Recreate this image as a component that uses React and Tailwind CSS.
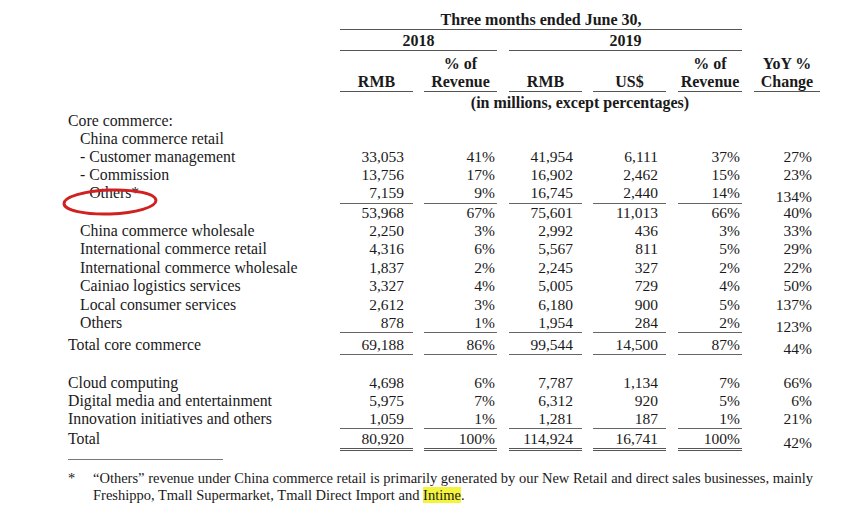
const cols = [
  'w-[73px] pr-[9px]',
  'ml-[11px] w-[73px] pr-[2px]',
  'ml-[12px] w-[73px] pr-[9px]',
  'ml-[11px] w-[73px] pr-[8px]',
  'ml-[12px] w-[64px] pr-[2px]',
  'ml-[12px] w-[66px] pr-[8px]',
];

const top = [
  { label: 'Core commerce:' },
  { label: 'China commerce retail', indent: true },
  { label: '- Customer management', indent: true, v: ['33,053', '41%', '41,954', '6,111', '37%', '27%'] },
  { label: '- Commission', indent: true, v: ['13,756', '17%', '16,902', '2,462', '15%', '23%'] },
];

const mid = [
  { label: 'China commerce wholesale', v: ['2,250', '3%', '2,992', '436', '3%', '33%'] },
  { label: 'International commerce retail', v: ['4,316', '6%', '5,567', '811', '5%', '29%'] },
  { label: 'International commerce wholesale', v: ['1,837', '2%', '2,245', '327', '2%', '22%'] },
  { label: 'Cainiao logistics services', v: ['3,327', '4%', '5,005', '729', '4%', '50%'] },
  { label: 'Local consumer services', v: ['2,612', '3%', '6,180', '900', '5%', '137%'] },
];

const other = [
  { label: 'Cloud computing', v: ['4,698', '6%', '7,787', '1,134', '7%', '66%'] },
  { label: 'Digital media and entertainment', v: ['5,975', '7%', '6,312', '920', '5%', '6%'] },
];

function Row({ label, indent, v = [], h = 'h-[18px]', line, shift, pad = '' }) {
  return (
    <div className={`flex ${h} leading-[18px]`}>
      <div className={`w-[272px] text-[15.8px] ${indent ? 'pl-[12px]' : ''} ${pad}`}>{label}</div>
      {v.map((x, i) => (
        <div
          key={i}
          className={`${cols[i]} text-right ${pad} ${line && i < 5 ? line : ''} ${shift && i === 5 ? 'translate-y-[4px]' : ''}`}
        >
          {x}
        </div>
      ))}
    </div>
  );
}

export default function App() {
  return (
    <div className="relative w-[864px] h-[524px] bg-white text-[#1a1a1a] font-['Liberation_Serif',serif] text-[15.5px] pl-[68px] pt-[11px] overflow-hidden">
      {/* header */}
      <div className="font-bold text-[16px]">
        <div className="flex">
          <div className="w-[272px]" />
          <div className="w-[402px] text-center leading-[18px] border-b border-[#555]">Three months ended June 30,</div>
        </div>
        <div className="flex mt-[2px]">
          <div className="w-[272px]" />
          <div className="w-[157px] text-center leading-[18px] border-b border-[#555]">2018</div>
          <div className="ml-[12px] w-[233px] text-center leading-[18px] border-b border-[#555]">2019</div>
        </div>
        <div className="flex mt-[4px] leading-[18px]">
          <div className="w-[272px]" />
          {[['', 'RMB'], ['% of', 'Revenue'], ['', 'RMB'], ['', 'US$'], ['% of', 'Revenue'], ['YoY %', 'Change']].map((c, i) => (
            <div key={i} className={`${cols[i]} !px-0 text-center border-b border-[#555]`}>
              <div className="h-[18px]">{c[0]}</div>
              <div>{c[1]}</div>
            </div>
          ))}
        </div>
        <div className="flex mt-[2px] leading-[18px]">
          <div className="w-[272px]" />
          <div className="w-[480px] text-center">(in millions, except percentages)</div>
        </div>
      </div>

      {/* core commerce */}
      <div className="leading-[18px]">
        {top.map((r, i) => (
          <Row key={i} {...r} />
        ))}
        <Row
          label="- Others*"
          indent
          h="h-[20px]"
          line="border-b border-[#666]"
          v={['7,159', '9%', '16,745', '2,440', '14%', '134%']}
          shift
        />
        <Row label="" v={['53,968', '67%', '75,601', '11,013', '66%', '40%']} />
        <div className="leading-[18.4px]">
          {mid.map((r, i) => (
            <Row key={i} {...r} indent h="h-[18.4px]" />
          ))}
          <Row
            label="Others"
            indent
            h="h-[19.4px]"
            line="border-b border-[#666]"
            v={['878', '1%', '1,954', '284', '2%', '123%']}
            shift
          />
        </div>
        <Row
          label="Total core commerce"
          h="h-[22px]"
          pad="pt-[2.6px]"
          line="border-b border-[#666]"
          v={['69,188', '86%', '99,544', '14,500', '87%', '44%']}
          shift
        />
      </div>

      <div className="h-[18.4px]" />

      <div>
        {other.map((r, i) => (
          <Row key={i} {...r} />
        ))}
        <Row
          label="Innovation initiatives and others"
          h="h-[19px]"
          line="border-b border-[#666]"
          v={['1,059', '1%', '1,281', '187', '1%', '21%']}
        />
        <Row
          label="Total"
          h="h-[22px]"
          pad="pt-[1px]"
          line="border-b-[3px] border-double border-[#555]"
          v={['80,920', '100%', '114,924', '16,741', '100%', '42%']}
          shift
        />
      </div>

      {/* footnote */}
      <div className="mt-[8px] w-[155px] border-t border-[#777]" />
      <div className="flex mt-[10px] leading-[17.5px] text-[14.5px]">
        <div className="w-[25px]">*</div>
        <div>
          “Others” revenue under China commerce retail is primarily generated by our New Retail and direct sales businesses, mainly
          <br />
          Freshippo, Tmall Supermarket, Tmall Direct Import and <span className="bg-[#f4f43c]">Intime</span>.
        </div>
      </div>

      {/* red circle around Others* */}
      <svg className="absolute left-[58px] top-[186px]" width="104" height="32" viewBox="0 0 104 32">
        <ellipse cx="52" cy="16" rx="46" ry="12" fill="none" stroke="#d02020" strokeWidth="3" transform="rotate(-2 52 16)" />
      </svg>
    </div>
  );
}
